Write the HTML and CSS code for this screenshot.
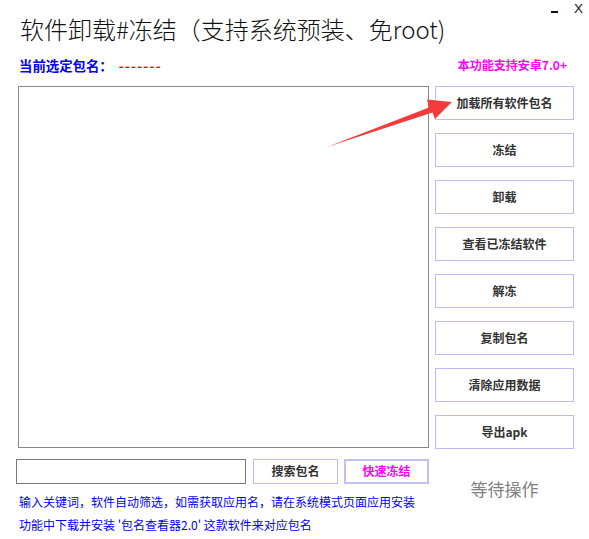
FILE: index.html
```html
<!DOCTYPE html>
<html lang="zh-CN">
<head>
<meta charset="utf-8">
<title>软件卸载#冻结</title>
<link rel="stylesheet" href="styles.css">
</head>
<body>
<div class="window">
  <div class="topbar">
    <span class="min-btn" aria-label="最小化"></span>
    <span class="close-btn">X</span>
  </div>
  <div class="title">软件卸载#冻结（支持系统预装、免root)</div>
  <div class="info">
    <div class="selected"><span class="sel-label">当前选定包名：</span><span class="sel-value">-------</span></div>
    <div class="support">本功能支持安卓7.0+</div>
  </div>
  <div class="main">
    <div class="left">
      <div class="listbox"></div>
      <div class="searchrow">
        <div class="search-input"></div>
        <div class="btn btn-search">搜索包名</div>
        <div class="btn btn-quick">快速冻结</div>
      </div>
      <div class="hints">
        <div>输入关键词，软件自动筛选，如需获取应用名，请在系统模式页面应用安装</div>
        <div>功能中下载并安装 '包名查看器2.0' 这款软件来对应包名</div>
      </div>
    </div>
    <div class="right">
      <div class="actions">
        <div class="btn">加载所有软件包名</div>
        <div class="btn">冻结</div>
        <div class="btn">卸载</div>
        <div class="btn">查看已冻结软件</div>
        <div class="btn">解冻</div>
        <div class="btn">复制包名</div>
        <div class="btn">清除应用数据</div>
        <div class="btn">导出apk</div>
      </div>
      <div class="status">等待操作</div>
    </div>
  </div>
  <svg class="arrow" width="589" height="539" viewBox="0 0 589 539">
    <polygon points="327,147 429,107.5 427,99.5 452,102 435,119 432.5,112.5" fill="#f23b3b"/>
  </svg>
</div>
</body>
</html>
```

FILE: styles.css
```css
html, body {
  margin: 0;
  padding: 0;
  background: #ffffff;
}

body {
  width: 589px;
  height: 539px;
  overflow: hidden;
  font-family: "Noto Sans CJK SC", "Liberation Sans", sans-serif;
  color: #000;
}

.window {
  position: relative;
  width: 589px;
  height: 539px;
}

.topbar {
  height: 14px;
  display: flex;
  justify-content: flex-end;
  align-items: flex-start;
  padding-right: 6px;
}

.min-btn {
  display: block;
  width: 7px;
  height: 2px;
  background: #111;
  margin-top: 11px;
  margin-right: 16px;
}

.close-btn {
  display: block;
  font-family: "Liberation Sans", sans-serif;
  font-size: 13.5px;
  line-height: 13px;
  margin-top: 2px;
  color: #111;
}

.title {
  margin-left: 20px;
  font-size: 24px;
  line-height: 29px;
  font-weight: 300;
  color: #111;
  white-space: nowrap;
}

.info {
  margin-top: 14px;
  display: flex;
  justify-content: space-between;
  align-items: center;
  padding-left: 19px;
  padding-right: 22px;
  height: 16px;
  font-weight: 700;
}

.selected {
  display: flex;
  align-items: center;
  font-size: 13.4px;
  line-height: 16px;
}

.sel-label {
  color: #0000ff;
}

.sel-value {
  color: #ff0000;
  margin-left: 6px;
  letter-spacing: 1.2px;
}

.support {
  color: #ff00ff;
  font-size: 12px;
  line-height: 16px;
}

.main {
  margin-top: 13px;
  padding-left: 16px;
  display: flex;
  align-items: flex-start;
}

.left {
  width: 413px;
}

.listbox {
  margin-left: 2px;
  width: 411px;
  height: 362px;
  box-sizing: border-box;
  border: 1px solid #828790;
  background: #fff;
}

.searchrow {
  margin-top: 11px;
  display: flex;
  height: 25px;
}

.search-input {
  width: 230px;
  height: 25px;
  box-sizing: border-box;
  border: 1px solid #7a7a7a;
}

.btn {
  box-sizing: border-box;
  border: 1px solid #bcbcf6;
  background: #fff;
  display: flex;
  align-items: center;
  justify-content: center;
  padding-bottom: 2px;
  font-size: 12px;
  font-weight: 700;
  color: #333;
  white-space: nowrap;
}

.btn-search {
  margin-left: 7px;
  width: 85px;
  height: 25px;
}

.btn-quick {
  margin-left: 6px;
  width: 85px;
  height: 25px;
  border: 2px solid #c0c0f4;
  color: #ff00ff;
}

.hints {
  padding-left: 3px;
  margin-top: 6px;
  font-size: 12px;
  line-height: 23px;
  color: #0000ff;
  white-space: nowrap;
}

.right {
  margin-left: 6px;
  width: 139px;
}

.actions {
  display: flex;
  flex-direction: column;
  gap: 13px;
}

.actions .btn {
  height: 34px;
}

.status {
  margin-top: 30px;
  text-align: center;
  font-size: 17px;
  line-height: 20px;
  font-weight: 400;
  color: #808080;
}

.arrow {
  position: absolute;
  left: 0;
  top: 0;
  pointer-events: none;
}
```
